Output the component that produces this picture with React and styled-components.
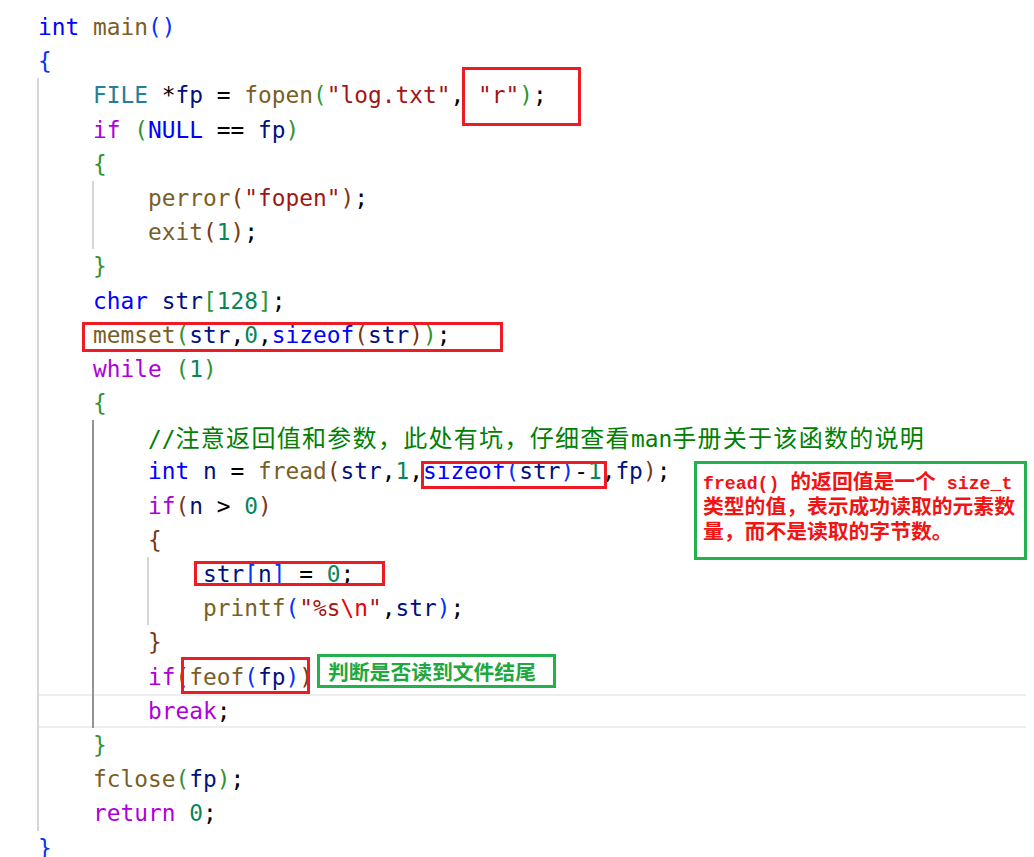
import React from 'react';
import styled, { createGlobalStyle, css } from 'styled-components';

const Global = createGlobalStyle`
  html, body { margin: 0; padding: 0; background: #ffffff; }
`;

const BRACKETS = { 1: '#0431fa', 2: '#319331', 3: '#7b3814' };

const Editor = styled.div`
  position: relative;
  z-index: 0;
  width: 1034px;
  height: 857px;
  overflow: hidden;
  box-sizing: border-box;
  padding: 10px 0 0 38px;
  background: #ffffff;
  font-family: "DejaVu Sans Mono", "Liberation Mono", monospace;
  font-size: 22.84px;
  line-height: 34.2px;
  color: #000000;
`;

const Line = styled.div`
  position: relative;
  height: 34.2px;
  white-space: pre;
  ${(p) =>
    p.$current &&
    css`
      &::before {
        content: '';
        position: absolute;
        z-index: -1;
        top: 0;
        bottom: 0;
        left: ${-p.$offset}px;
        right: 8px;
        border-top: 2px solid #eeeeee;
        border-bottom: 2px solid #eeeeee;
      }
    `}
`;

const Block = styled.div`
  margin-left: -1px;
  padding-left: 54px;
  border-left: 2px solid ${(p) => (p.$active ? '#939393' : '#d6d6d6')};
`;

const Kw = styled.span`color: #0000ff;`;
const Ctrl = styled.span`color: #af00db;`;
const Fn = styled.span`color: #795e26;`;
const Var = styled.span`color: #001080;`;
const Ty = styled.span`color: #267f99;`;
const Str = styled.span`color: #a31515;`;
const Num = styled.span`color: #098658;`;
const Esc = styled.span`color: #ee0000;`;
const Cmt = styled.span`color: #008000;`;
const Br = styled.span`color: ${(p) => BRACKETS[p.$l]};`;

const Cjk = styled.span`
  font-family: "Noto Sans CJK SC", sans-serif;
  font-size: 24px;
  letter-spacing: 1.3px;
`;

const Mark = styled.div`
  position: absolute;
  left: ${(p) => p.$x}px;
  top: ${(p) => p.$y}px;
  width: ${(p) => p.$w}px;
  height: ${(p) => p.$h}px;
  box-sizing: border-box;
  border: 3px solid ${(p) => (p.$tone === 'green' ? '#22b14c' : '#ed1c24')};
  pointer-events: none;
`;

const Note = styled(Mark)`
  padding: 3.5px 0 0 6px;
  color: #f01414;
  font-family: "Noto Sans CJK SC", sans-serif;
  font-size: 20.8px;
  font-weight: 700;
  line-height: 25px;
  white-space: pre;
`;

const NoteLine = styled.div`
  height: 25px;
`;

const Latin = styled.span`
  font-family: "Liberation Mono", monospace;
  font-size: 18.2px;
  font-weight: 700;
`;

const Tag = styled(Mark)`
  padding-left: 8px;
  color: #1fa83f;
  font-family: "Noto Sans CJK SC", sans-serif;
  font-size: 20.8px;
  font-weight: 700;
  line-height: 28px;
  white-space: pre;
`;

export default function App() {
  return (
    <>
      <Global />
      <Editor>
        <Line><Kw>int</Kw> <Fn>main</Fn><Br $l={1}>()</Br></Line>
        <Line><Br $l={1}>{'{'}</Br></Line>
        <Block>
          <Line><Ty>FILE</Ty> *<Var>fp</Var> = <Fn>fopen</Fn><Br $l={2}>(</Br><Str>"log.txt"</Str>, <Str>"r"</Str><Br $l={2}>)</Br>;</Line>
          <Line><Ctrl>if</Ctrl> <Br $l={2}>(</Br><Kw>NULL</Kw> == <Var>fp</Var><Br $l={2}>)</Br></Line>
          <Line><Br $l={2}>{'{'}</Br></Line>
          <Block>
            <Line><Fn>perror</Fn><Br $l={3}>(</Br><Str>"fopen"</Str><Br $l={3}>)</Br>;</Line>
            <Line><Fn>exit</Fn><Br $l={3}>(</Br><Num>1</Num><Br $l={3}>)</Br>;</Line>
          </Block>
          <Line><Br $l={2}>{'}'}</Br></Line>
          <Line><Kw>char</Kw> <Var>str</Var><Br $l={2}>[</Br><Num>128</Num><Br $l={2}>]</Br>;</Line>
          <Line><Fn>memset</Fn><Br $l={2}>(</Br><Var>str</Var>,<Num>0</Num>,<Kw>sizeof</Kw><Br $l={3}>(</Br><Var>str</Var><Br $l={3}>)</Br><Br $l={2}>)</Br>;</Line>
          <Line><Ctrl>while</Ctrl> <Br $l={2}>(</Br><Num>1</Num><Br $l={2}>)</Br></Line>
          <Line><Br $l={2}>{'{'}</Br></Line>
          <Block $active>
            <Line><Cmt>//<Cjk>注意返回值和参数，此处有坑，仔细查看</Cjk>man<Cjk>手册关于该函数的说明</Cjk></Cmt></Line>
            <Line><Kw>int</Kw> <Var>n</Var> = <Fn>fread</Fn><Br $l={3}>(</Br><Var>str</Var>,<Num>1</Num>,<Kw>sizeof</Kw><Br $l={1}>(</Br><Var>str</Var><Br $l={1}>)</Br>-<Num>1</Num>,<Var>fp</Var><Br $l={3}>)</Br>;</Line>
            <Line><Ctrl>if</Ctrl><Br $l={3}>(</Br><Var>n</Var> &gt; <Num>0</Num><Br $l={3}>)</Br></Line>
            <Line><Br $l={3}>{'{'}</Br></Line>
            <Block>
              <Line><Var>str</Var><Br $l={1}>[</Br><Var>n</Var><Br $l={1}>]</Br> = <Num>0</Num>;</Line>
              <Line><Fn>printf</Fn><Br $l={1}>(</Br><Str>"%s</Str><Esc>{'\\n'}</Esc><Str>"</Str>,<Var>str</Var><Br $l={1}>)</Br>;</Line>
            </Block>
            <Line><Br $l={3}>{'}'}</Br></Line>
            <Line><Ctrl>if</Ctrl><Br $l={3}>(</Br><Fn>feof</Fn><Br $l={1}>(</Br><Var>fp</Var><Br $l={1}>)</Br><Br $l={3}>)</Br></Line>
            <Line $current $offset={110}><Ctrl>break</Ctrl>;</Line>
          </Block>
          <Line><Br $l={2}>{'}'}</Br></Line>
          <Line><Fn>fclose</Fn><Br $l={2}>(</Br><Var>fp</Var><Br $l={2}>)</Br>;</Line>
          <Line><Ctrl>return</Ctrl> <Num>0</Num>;</Line>
        </Block>
        <Line><Br $l={1}>{'}'}</Br></Line>

        <Mark $x={462} $y={67} $w={119} $h={59} />
        <Mark $x={82} $y={322} $w={421} $h={30} />
        <Mark $x={421} $y={461} $w={186} $h={28} />
        <Mark $x={194} $y={561} $w={191} $h={25} />
        <Mark $x={181} $y={657} $w={129} $h={37} />
        <Note $tone="green" $x={694} $y={461} $w={333} $h={99}>
          <NoteLine><Latin>fread() </Latin>的返回值是一个<Latin> size_t</Latin></NoteLine>
          <NoteLine>类型的值，表示成功读取的元素数</NoteLine>
          <NoteLine>量，而不是读取的字节数。</NoteLine>
        </Note>
        <Tag $tone="green" $x={317} $y={654} $w={239} $h={34}>判断是否读到文件结尾</Tag>
      </Editor>
    </>
  );
}
